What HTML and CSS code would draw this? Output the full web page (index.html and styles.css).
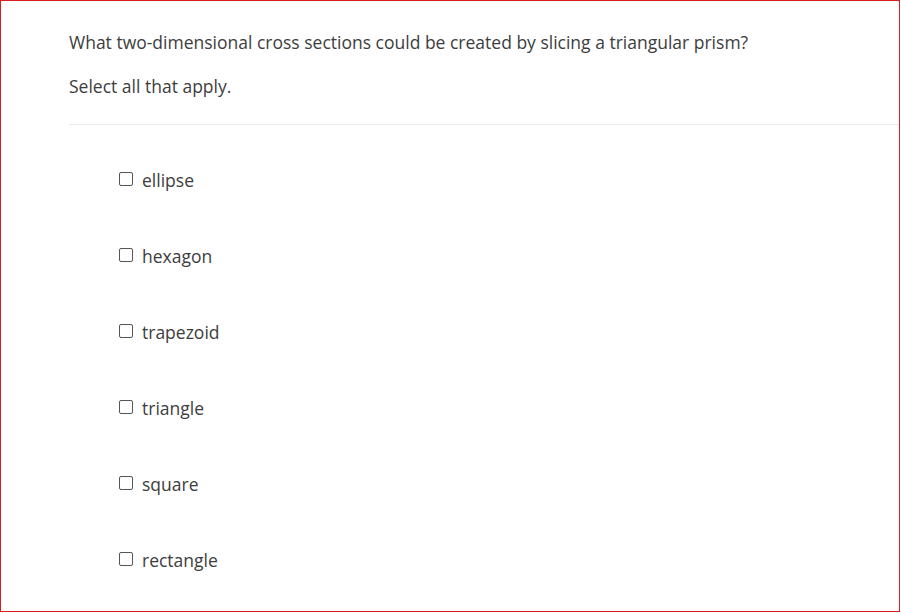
FILE: index.html
```html
<!DOCTYPE html>
<html>
<head>
<meta charset="utf-8">
<link rel="stylesheet" href="styles.css">
</head>
<body>
<div class="frame">
  <div class="question">
    <p class="prompt">What two-dimensional cross sections could be created by slicing a triangular prism?</p>
    <p class="instruction">Select all that apply.</p>
  </div>
  <ul class="options">
    <li class="option"><span class="box"></span><span class="label">ellipse</span></li>
    <li class="option"><span class="box"></span><span class="label">hexagon</span></li>
    <li class="option"><span class="box"></span><span class="label">trapezoid</span></li>
    <li class="option"><span class="box"></span><span class="label">triangle</span></li>
    <li class="option"><span class="box"></span><span class="label">square</span></li>
    <li class="option"><span class="box"></span><span class="label">rectangle</span></li>
  </ul>
</div>
</body>
</html>
```
FILE: styles.css
```css
html, body {
  margin: 0;
  padding: 0;
  background: #ffffff;
}
body {
  font-family: "Open Sans", "Liberation Sans", sans-serif;
  color: #3d3d3d;
}
.frame {
  box-sizing: border-box;
  width: 900px;
  height: 612px;
  border: 1px solid #d81e1e;
  display: flex;
  flex-direction: column;
  padding-left: 68px;
}
.question {
  border-bottom: 1px solid #ebebeb;
  padding-top: 29px;
  padding-bottom: 26px;
}
.prompt, .instruction {
  margin: 0;
  font-size: 17.5px;
  line-height: 24px;
}
.instruction {
  margin-top: 20px;
}
.options {
  list-style: none;
  margin: 0;
  padding: 0 0 0 50px;
  display: flex;
  flex-direction: column;
  gap: 52px;
  padding-top: 43px;
}
.option {
  display: flex;
  align-items: center;
  height: 24px;
  font-size: 17.5px;
}
.box {
  box-sizing: border-box;
  width: 14px;
  height: 14px;
  border: 1px solid #555;
  border-radius: 2px;
  margin-right: 9px;
  margin-top: -2px;
}
```
